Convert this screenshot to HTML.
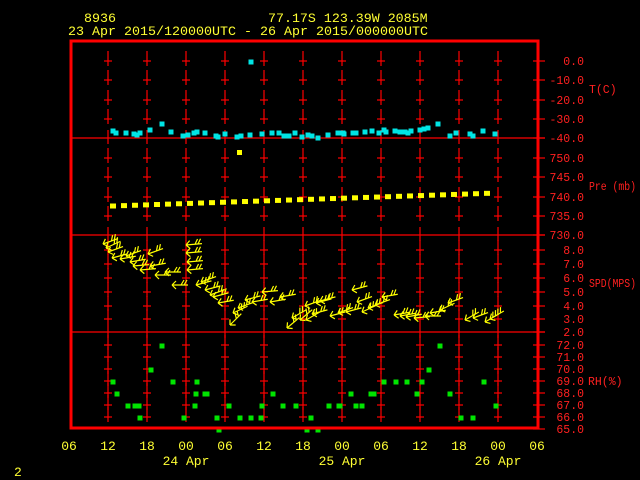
<!DOCTYPE html>
<html><head><meta charset="utf-8"><style>
html,body{margin:0;padding:0;background:#000;width:640px;height:480px;overflow:hidden}
svg{display:block}
text{font-family:"Liberation Mono",monospace}
</style></head><body>
<svg id="s" width="640" height="480" xmlns="http://www.w3.org/2000/svg">
<rect width="640" height="480" fill="#000"/>
<g fill="#ffff33" font-size="13.3">
<text x="84" y="22">8936</text>
<text x="268" y="22">77.17S  123.39W  2085M</text>
<text x="68" y="35" textLength="360" lengthAdjust="spacingAndGlyphs">23 Apr 2015/120000UTC - 26 Apr 2015/000000UTC</text>
</g>
<g id="grid" stroke="#ff0000" stroke-width="1.2"></g>
<g id="pts"></g>
<g id="barbs" stroke="#ffff00" stroke-width="1.2" fill="none"></g>
<rect x="71" y="41" width="467" height="387" fill="none" stroke="#ff0000" stroke-width="3"/>
<g fill="#ff2020" font-size="11.5" id="rl" text-anchor="end"></g>
<g fill="#ff2020" font-size="11.5">
<text x="589" y="93">T(C)</text>
<text x="589" y="190" textLength="47" lengthAdjust="spacingAndGlyphs">Pre (mb)</text>
<text x="589" y="287" textLength="47" lengthAdjust="spacingAndGlyphs">SPD(MPS)</text>
<text x="588" y="385">RH(%)</text>
</g>
<g fill="#ffff33" font-size="13" text-anchor="middle" id="bl">
<text x="186" y="465">24 Apr</text>
<text x="342" y="465">25 Apr</text>
<text x="498" y="465">26 Apr</text>
</g>
<text x="14" y="476" fill="#ffff33" font-size="13">2</text>
</svg>
<script>
var NS="http://www.w3.org/2000/svg";
function el(p,n,a){var e=document.createElementNS(NS,n);for(var k in a)e.setAttribute(k,a[k]);document.getElementById(p).appendChild(e);return e;}
var xs=[108,147,186,225,264,303,342,381,420,459,498];
var panels=[[61,80,100,119,138],[158,177,197,216,235],[250,264,278,292,306,319,332],[345,357,369,381,393,405,417]];
var labs=[["0.0","-10.0","-20.0","-30.0","-40.0"],["750.0","745.0","740.0","735.0","730.0"],["8.0","7.0","6.0","5.0","4.0","3.0","2.0"],["72.0","71.0","70.0","69.0","68.0","67.0","66.0"]];
[138,235,332].forEach(function(y){el("grid","line",{x1:71,y1:y,x2:545,y2:y});});
panels.forEach(function(p,i){
  xs.forEach(function(x){
    for(var j=0;j<p.length;j++){
      var t=p[j];
      if(i<3&&j==p.length-1){el("grid","line",{x1:x,y1:t-8,x2:x,y2:t+6});continue;}
      el("grid","line",{x1:x,y1:t-10,x2:x,y2:t+5});
      el("grid","line",{x1:x-4,y1:t,x2:x+4,y2:t});
    }
  });
  p.forEach(function(t,j){
    el("grid","line",{x1:533,y1:t,x2:545,y2:t});
    var tx=el("rl","text",{x:584,y:t+4});tx.textContent=labs[i][j];
  });
});
el("grid","line",{x1:533,y1:429,x2:545,y2:429});
var t65=el("rl","text",{x:584,y:433});t65.textContent="65.0";
var bx=[69,108,147,186,225,264,303,342,381,420,459,498,537],bt=["06","12","18","00","06","12","18","00","06","12","18","00","06"];
bx.forEach(function(x,i){var t=el("bl","text",{x:x,y:450});t.textContent=bt[i];});
var cy=[[113,131],[116,133],[126,133],[134,134],[137,135],[140,133],[150,130],[162,124],[171,132],[183,136],[188,135],[194,133],[197,132],[205,133],[216,136],[218,137],[225,134],[237,137],[241,136],[250,135],[251,62],[262,134],[272,133],[279,133],[284,136],[289,136],[295,133],[302,137],[308,135],[312,136],[318,138],[328,135],[338,133],[343,133],[344,134],[353,133],[356,133],[365,132],[372,131],[379,133],[386,132],[384,130],[395,131],[400,132],[405,132],[408,133],[411,131],[420,130],[424,129],[428,128],[438,124],[450,136],[456,133],[470,134],[473,136],[483,131],[495,134]];
cy.forEach(function(p){el("pts","rect",{x:p[0]-2.5,y:p[1]-2.5,width:5,height:5,fill:"#00e5e5"});});
for(var x=113;x<=497;x+=11){var y=206-(x-113)*13/384;el("pts","rect",{x:x-3,y:y-2.5,width:6,height:5,fill:"#ffff00"});}
el("pts","rect",{x:237,y:150,width:5,height:5,fill:"#ffff00"});
var gr=[[113,382],[117,394],[128,406],[135,406],[139,406],[140,418],[151,370],[162,346],[173,382],[184,418],[197,382],[196,394],[195,406],[205,394],[207,394],[219,430],[217,418],[229,406],[240,418],[251,418],[261,418],[262,406],[273,394],[283,406],[296,406],[307,430],[311,418],[318,430],[329,406],[339,406],[340,406],[351,394],[356,406],[362,406],[371,394],[374,394],[384,382],[396,382],[407,382],[422,382],[417,394],[429,370],[440,346],[450,394],[461,418],[473,418],[484,382],[496,406]];
gr.forEach(function(p){el("pts","rect",{x:p[0]-2.5,y:p[1]-2.5,width:5,height:5,fill:"#00e500"});});
var b=[[103,244,-20],[106,248,-25],[108,252,-20],[112,258,-15],[120,259,-10],[126,256,-20],[130,262,-10],[133,266,-5],[140,270,-5],[148,254,-20],[150,266,-10],[155,275,0],[165,272,0],[172,285,0],[186,245,-5],[186,253,-5],[187,262,-5],[187,270,-5],[196,285,-15],[201,282,-20],[205,290,-15],[210,295,-20],[213,297,-15],[218,303,-10],[230,325,-45],[233,313,-25],[238,308,-20],[245,300,-15],[252,302,-10],[262,292,-5],[270,302,-10],[280,297,-10],[287,328,-40],[292,318,-30],[300,320,-40],[306,320,-30],[305,306,-20],[312,314,-15],[316,303,-15],[320,301,-15],[330,316,-15],[338,313,-20],[346,312,-15],[352,290,-15],[357,302,-20],[362,312,-25],[368,308,-20],[375,305,-20],[382,297,-10],[394,315,-10],[400,316,-10],[406,317,-10],[414,318,-5],[425,316,0],[430,313,-10],[440,310,-25],[448,303,-20],[465,320,-30],[473,318,-20],[485,322,-30],[490,319,-30]];
b.forEach(function(p){
  var g=el("barbs","g",{transform:"translate("+p[0]+","+p[1]+") rotate("+p[2]+")"});
  var d="M0,0 L16,0 M0,0 L4,-4 M0,0 L4,4 M9,0 L12,-5 M12,0 L15,-5";
  var e=document.createElementNS(NS,"path");e.setAttribute("d",d);g.appendChild(e);
});
</script>
</body></html>
